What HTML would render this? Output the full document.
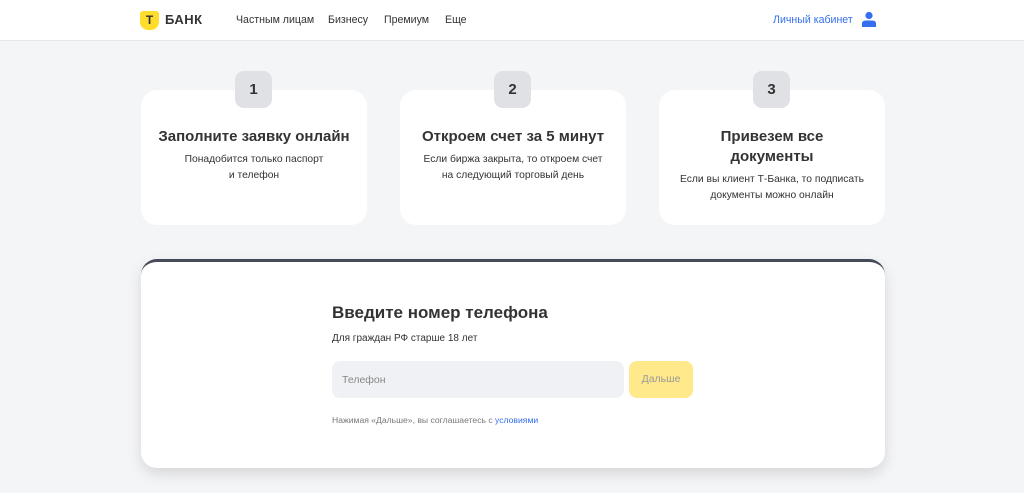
<!DOCTYPE html>
<html><head><meta charset="utf-8"><style>
*{margin:0;padding:0;box-sizing:border-box}
body{width:1024px;height:493px;overflow:hidden;background:#f4f5f7;font-family:"Liberation Sans",sans-serif;color:#333;position:relative}
.hdr{position:absolute;left:0;top:0;width:1024px;height:41px;background:#fff;border-bottom:1px solid #e6e7e9}
.logo{position:absolute;left:140px;top:11px;width:19px;height:19px;background:#ffdd2d;border-radius:3px 3px 8px 8px;font:bold 12px "Liberation Sans";text-align:center;line-height:18px;color:#333}
.bank{position:absolute;left:165px;top:12px;font:bold 13px "Liberation Sans";letter-spacing:.5px;color:#333}
.nav{position:absolute;top:14px;font-size:10.6px;color:#333}
.card{position:absolute;top:90px;width:226px;height:135px;background:#fff;border-radius:16px;text-align:center}
.num{position:absolute;top:71px;width:37px;height:37px;background:#dfe1e5;border-radius:9px;font-size:15px;font-weight:bold;text-align:center;line-height:37px;color:#333}
.card h3{font-size:15px;font-weight:bold;margin-top:37px;line-height:20px;color:#333}
.card p{font-size:10.3px;line-height:16px;margin-top:5px;color:#333}
.form{position:absolute;left:141px;top:259px;width:744px;height:209px;background:#fff;border-radius:16px;border-top:3px solid #464b5a;box-shadow:0 6px 14px rgba(0,0,0,.12)}
</style></head><body>
<div class="hdr">
<div class="logo">Т</div><div class="bank">БАНК</div>
<div class="nav" style="left:236px">Частным лицам</div>
<div class="nav" style="left:328px">Бизнесу</div>
<div class="nav" style="left:384px">Премиум</div>
<div class="nav" style="left:445px">Еще</div>
<div class="nav" style="left:773px;color:#336fee">Личный кабинет</div>
<svg style="position:absolute;left:862px;top:11px" width="14" height="16" viewBox="0 0 14 16"><circle cx="7" cy="4.5" r="3.6" fill="#336fee"/><path d="M0 16v-3.5Q0 9.5 4 9.5h6q4 0 4 3V16z" fill="#336fee"/></svg>
</div>
<div class="card" style="left:141px"><h3>Заполните заявку онлайн</h3><p>Понадобится только паспорт<br>и телефон</p></div>
<div class="card" style="left:400px"><h3>Откроем счет за 5 минут</h3><p>Если биржа закрыта, то откроем счет<br>на следующий торговый день</p></div>
<div class="card" style="left:659px"><h3>Привезем все<br>документы</h3><p>Если вы клиент Т-Банка, то подписать<br>документы можно онлайн</p></div>
<div class="num" style="left:235px">1</div>
<div class="num" style="left:494px">2</div>
<div class="num" style="left:753px">3</div>
<div class="form">
<div style="position:absolute;left:191px;top:41px;font-size:17px;font-weight:bold;color:#333">Введите номер телефона</div>
<div style="position:absolute;left:191px;top:71px;font-size:10px;color:#333">Для граждан РФ старше 18 лет</div>
<div style="position:absolute;left:191px;top:99px;width:292px;height:37px;background:#f0f1f4;border-radius:8px;font-size:10.5px;color:#888;padding:13px 0 0 10px">Телефон</div>
<div style="position:absolute;left:488px;top:99px;width:64px;height:37px;background:#ffe98a;border-radius:8px;font-size:10.5px;color:#999;text-align:center;line-height:37px">Дальше</div>
<div style="position:absolute;left:191px;top:153px;font-size:8.6px;color:#777">Нажимая «Дальше», вы соглашаетесь с <span style="color:#336fee">условиями</span></div>
</div>
</body></html>
